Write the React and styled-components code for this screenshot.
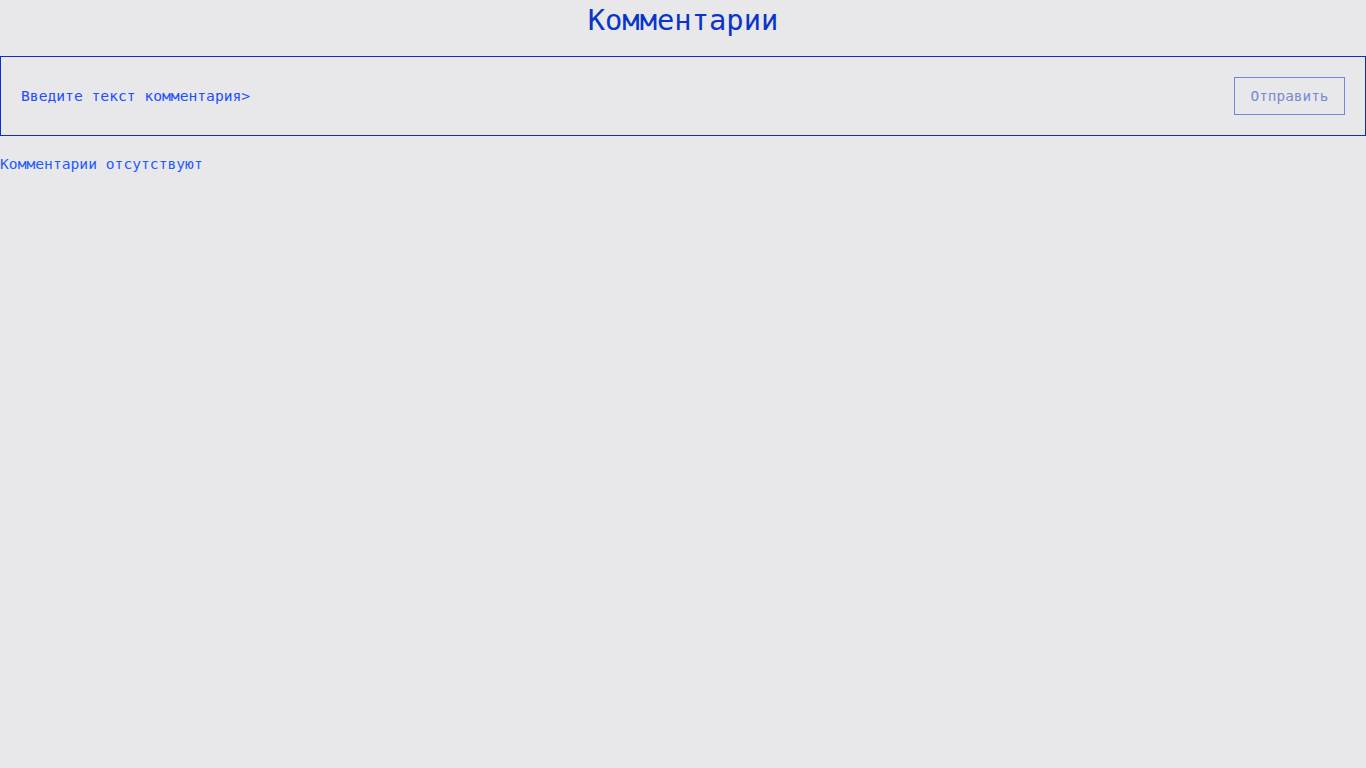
import React from "react";
import styled, { createGlobalStyle } from "styled-components";

const Global = createGlobalStyle`
  html, body { margin: 0; padding: 0; background: #e8e8eb; }
  body { font-family: "DejaVu Sans Mono", "Liberation Mono", monospace; font-size: 14.4px; }
`;

const Page = styled.div`
  display: flex;
  flex-direction: column;
  min-height: 768px;
  background: #e8e8eb;
`;

const Title = styled.h1`
  margin: 0 0 16px;
  height: 40px;
  line-height: 40px;
  text-align: center;
  font-weight: normal;
  font-size: 28.8px;
  color: #0a36c8;
`;

const Form = styled.form`
  display: flex;
  align-items: center;
  gap: 20px;
  padding: 20px;
  border: 1px solid #0a2ec8;
`;

const Input = styled.input`
  flex: 1;
  align-self: flex-start;
  height: 36px;
  border: none;
  background: transparent;
  outline: none;
  padding: 0;
  font-family: inherit;
  font-size: 14.65px;
  color: #1f4fff;
  &::placeholder { color: #1f4fff; opacity: 1; }
`;

const Button = styled.button`
  height: 38px;
  width: 111px;
  border: 1px solid #7088e2;
  background: transparent;
  color: #7a8ad0;
  font: inherit;
  cursor: pointer;
`;

const Empty = styled.p`
  margin: 19px 0 0;
  line-height: 17px;
  font-size: 14.65px;
  color: #1f5cff;
`;

export default function App() {
  return (
    <Page>
      <Global />
      <Title>Комментарии</Title>
      <Form onSubmit={(e) => e.preventDefault()}>
        <Input placeholder="Введите текст комментария>" />
        <Button type="submit">Отправить</Button>
      </Form>
      <Empty>Комментарии отсутствуют</Empty>
    </Page>
  );
}
